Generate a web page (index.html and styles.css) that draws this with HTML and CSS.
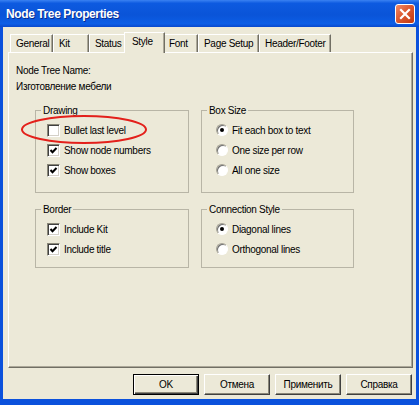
FILE: index.html
```html
<!DOCTYPE html>
<html lang="ru">
<head>
    <meta charset="UTF-8">
    <meta name="viewport" content="width=device-width, initial-scale=1.0">
    <title>Node Tree Properties</title>
    <link rel="stylesheet" href="styles.css">
</head>
<body>
    <div class="window">
        <div class="titlebar">
            <span class="title">Node Tree Properties</span>
            <span class="close">
                <svg width="18" height="18" viewBox="0 0 18 18">
                    <path d="M5 5 L13 13 M13 5 L5 13" stroke="#fff" stroke-width="2.2" stroke-linecap="square"/>
                </svg>
            </span>
        </div>

        <div class="frame">
            <div class="tabs">
                <div class="tab">General</div>
                <div class="tab">Kit</div>
                <div class="tab">Status</div>
                <div class="tab selected">Style</div>
                <div class="tab">Font</div>
                <div class="tab">Page Setup</div>
                <div class="tab">Header/Footer</div>
            </div>

            <div class="panel">
                <div class="name-label">Node Tree Name:</div>
                <div class="name-value">Изготовление мебели</div>

                <div class="groups">
                    <fieldset class="group">
                        <legend>Drawing</legend>
                        <div class="options checks">
                            <div class="option"><span class="check"></span>Bullet last level</div>
                            <div class="option">
                                <span class="check"><svg width="9" height="9" viewBox="0 0 9 9"><polyline points="1.5,4 3.5,6.2 7.5,2" fill="none" stroke="#000" stroke-width="2"/></svg></span>Show node numbers
                            </div>
                            <div class="option">
                                <span class="check"><svg width="9" height="9" viewBox="0 0 9 9"><polyline points="1.5,4 3.5,6.2 7.5,2" fill="none" stroke="#000" stroke-width="2"/></svg></span>Show boxes
                            </div>
                        </div>
                    </fieldset>

                    <fieldset class="group">
                        <legend>Box Size</legend>
                        <div class="options radios">
                            <div class="option"><span class="radio on"></span>Fit each box to text</div>
                            <div class="option"><span class="radio"></span>One size per row</div>
                            <div class="option"><span class="radio"></span>All one size</div>
                        </div>
                    </fieldset>

                    <fieldset class="group">
                        <legend>Border</legend>
                        <div class="options checks">
                            <div class="option">
                                <span class="check"><svg width="9" height="9" viewBox="0 0 9 9"><polyline points="1.5,4 3.5,6.2 7.5,2" fill="none" stroke="#000" stroke-width="2"/></svg></span>Include Kit
                            </div>
                            <div class="option">
                                <span class="check"><svg width="9" height="9" viewBox="0 0 9 9"><polyline points="1.5,4 3.5,6.2 7.5,2" fill="none" stroke="#000" stroke-width="2"/></svg></span>Include title
                            </div>
                        </div>
                    </fieldset>

                    <fieldset class="group">
                        <legend>Connection Style</legend>
                        <div class="options radios">
                            <div class="option"><span class="radio on"></span>Diagonal lines</div>
                            <div class="option"><span class="radio"></span>Orthogonal lines</div>
                        </div>
                    </fieldset>
                </div>
            </div>

            <div class="buttons">
                <button class="btn default">OK</button>
                <button class="btn">Отмена</button>
                <button class="btn">Применить</button>
                <button class="btn">Справка</button>
            </div>
        </div>

        <!-- red hand-drawn mark over the first option -->
        <svg class="mark" width="128" height="31" viewBox="0 0 128 31">
            <ellipse cx="64" cy="15.5" rx="62" ry="13.5" fill="none" stroke="#e3201b" stroke-width="2"/>
        </svg>
    </div>
</body>
</html>
```

FILE: styles.css
```css
body {
    margin: 0;
    font-family: 'Liberation Sans', Arial, sans-serif;
    font-size: 10px;
    letter-spacing: -0.3px;
    color: #000;
}
.window {
    position: relative;
    width: 419px;
    height: 405px;
    background: #0b51dc;
    display: flex;
    flex-direction: column;
    overflow: hidden;
}
.titlebar {
    height: 27px;
    flex: none;
    display: flex;
    align-items: center;
    justify-content: space-between;
    background: linear-gradient(to bottom, #3a82f2 0%, #0d5ae0 12%, #0a54d8 55%, #0c5ee6 88%, #0848cc 100%);
}
.title {
    padding-left: 6px;
    color: #fff;
    font-size: 12px;
    font-weight: bold;
    letter-spacing: -0.4px;
    text-shadow: 1px 1px 0 #0a2c8c;
}
.close {
    width: 18px;
    height: 18px;
    margin-right: 4px;
    border: 1px solid #fff;
    border-radius: 3px;
    background: linear-gradient(135deg, #f08a67 0%, #dd5a32 45%, #c1380f 100%);
    display: flex;
}
.frame {
    flex: 1;
    margin: 0 3px 6px 3px;
    background: #ece9d8;
    display: flex;
    flex-direction: column;
}

/* tabs */
.tabs {
    display: flex;
    padding: 7px 0 0 7px;
    height: 18px;
}
.tab {
    position: relative;
    height: 18px;
    box-sizing: border-box;
    padding-left: 5px;
    line-height: 17px;
    white-space: nowrap;
    border-top: 1px solid #fff;
    border-left: 1px solid #fff;
    border-right: 1px solid #716f64;
    box-shadow: inset -1px 0 0 #aca899;
}
.tab:nth-child(1) { width: 43px; }
.tab:nth-child(2) { width: 36px; }
.tab:nth-child(3) { width: 37px; }
.tab:nth-child(4) { width: 41px; }
.tab:nth-child(5) { width: 35px; }
.tab:nth-child(6) { width: 61px; }
.tab:nth-child(7) { width: 72px; }
.tab.selected {
    z-index: 1;
    margin: -2px -2px 0 -2px;
    height: 21px;
    padding-left: 7px;
    line-height: 18px;
    background: #ece9d8;
}

/* panel */
.panel {
    height: 316px;
    box-sizing: border-box;
    margin: 0 3px 0 5px;
    padding: 10px 0 0 7px;
    border: 1px solid;
    border-color: #fff #716f64 #716f64 #fff;
    box-shadow: inset -1px -1px 0 #aca899;
}
.name-label, .name-value { line-height: 16px; }
.groups {
    display: grid;
    grid-template-columns: 154px 153px;
    grid-template-rows: 89px 65px;
    column-gap: 12px;
    row-gap: 10px;
    margin: 9px 0 0 19px;
}
.group {
    margin: 0;
    padding: 0;
    min-width: 0;
    border: 1px solid #b8b5a6;
}
.group legend {
    margin-left: 5px;
    padding: 0 2px;
    line-height: 13px;
}
.options { padding-top: 3px; }
.checks { padding-left: 11px; }
.radios { padding-left: 14px; }
.option {
    height: 20px;
    display: flex;
    align-items: center;
    gap: 4px;
    white-space: nowrap;
}
.check {
    width: 13px;
    height: 13px;
    box-sizing: border-box;
    background: #fff;
    border: 1px solid;
    border-color: #8a8778 #fff #fff #8a8778;
    box-shadow: inset 1px 1px 0 #404040, inset -1px -1px 0 #d4d0c8;
    display: flex;
    align-items: center;
    justify-content: center;
}
.radio {
    position: relative;
    width: 12px;
    height: 12px;
    box-sizing: border-box;
    border-radius: 50%;
    background: #fff;
    border: 1px solid;
    border-color: #a3a093 #fff #fff #a3a093;
    box-shadow: inset 1px 1px 0 #707070;
}
.radio.on::after {
    content: '';
    position: absolute;
    left: 3px;
    top: 3px;
    width: 4px;
    height: 4px;
    border-radius: 50%;
    background: #000;
}

/* buttons */
.buttons {
    display: flex;
    justify-content: flex-end;
    gap: 5px;
    margin-top: 6px;
    padding-right: 4px;
}
.btn {
    width: 66px;
    height: 21px;
    padding: 0;
    font: inherit;
    letter-spacing: -0.3px;
    color: #000;
    background: #ece9d8;
    border: 1px solid;
    border-color: #fff #404040 #404040 #fff;
    box-shadow: inset -1px -1px 0 #8a8778;
}
.btn.default {
    border-color: #000;
    box-shadow: inset 1px 1px 0 #fff, inset -1px -1px 0 #404040, inset -2px -2px 0 #8a8778;
}

.mark {
    position: absolute;
    left: 20px;
    top: 114px;
    pointer-events: none;
}
```
